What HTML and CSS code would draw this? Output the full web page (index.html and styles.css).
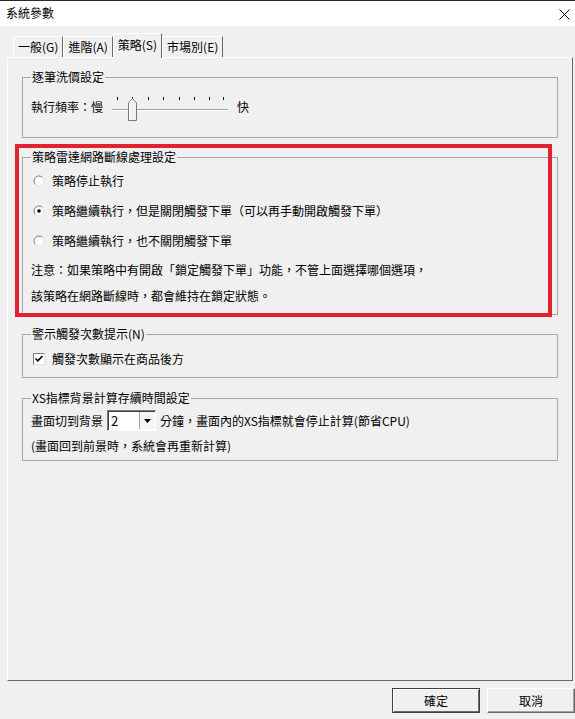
FILE: index.html
```html
<!DOCTYPE html>
<html lang="zh-Hant">
<head>
    <meta charset="UTF-8">
    <title>系統參數</title>
    <link rel="stylesheet" href="styles.css">
</head>
<body>
    <div class="window">
        <div class="titlebar">
            <span>系統參數</span>
            <svg class="close" width="11" height="11" viewBox="0 0 11 11">
                <path d="M0.5 0.5 L10.5 10.5 M10.5 0.5 L0.5 10.5" stroke="#000" stroke-width="1" fill="none"/>
            </svg>
        </div>

        <div class="tabs">
            <div class="tab">一般(G)</div>
            <div class="tab">進階(A)</div>
            <div class="tab active">策略(S)</div>
            <div class="tab">市場別(E)</div>
        </div>

        <div class="panel">
            <fieldset class="group group-price">
                <legend>逐筆洗價設定</legend>
                <div class="row slider-row">
                    <span>執行頻率：慢</span>
                    <svg class="slider" width="124" height="28" viewBox="0 0 124 28">
                        <g stroke="#000" stroke-width="1">
                            <path d="M9.5 4 V7 M24.5 4 V7 M40.5 4 V7 M55.5 4 V7 M71.5 4 V7 M86.5 4 V7 M101.5 4 V7 M115.5 4 V7"/>
                        </g>
                        <path d="M4 16.5 H120" stroke="#a0a0a0"/>
                        <path d="M4 17.5 H120" stroke="#fff"/>
                        <polygon points="20.5,10 24.5,5.5 28.5,10 28.5,27.5 20.5,27.5" fill="#f2f2f2" stroke="#7a7a7a"/>
                        <path d="M21.5 26.5 V10.5 L24.5 7" stroke="#fff" fill="none"/>
                    </svg>
                    <span class="fast">快</span>
                </div>
            </fieldset>

            <fieldset class="group group-radar">
                <legend>策略雷達網路斷線處理設定</legend>
                <label class="row option">
                    <svg class="radio" width="12" height="12" viewBox="0 0 12 12">
                        <circle cx="6" cy="6" r="5" fill="#fff"/>
                        <path d="M2.46 9.54 A5 5 0 0 1 9.54 2.46" stroke="#7a7a7a" fill="none"/>
                        <path d="M9.54 2.46 A5 5 0 0 1 2.46 9.54" stroke="#e3e3e3" fill="none"/>
                    </svg>
                    策略停止執行
                </label>
                <label class="row option">
                    <svg class="radio" width="12" height="12" viewBox="0 0 12 12">
                        <circle cx="6" cy="6" r="5" fill="#fff"/>
                        <path d="M2.46 9.54 A5 5 0 0 1 9.54 2.46" stroke="#7a7a7a" fill="none"/>
                        <path d="M9.54 2.46 A5 5 0 0 1 2.46 9.54" stroke="#e3e3e3" fill="none"/>
                        <circle cx="6" cy="6" r="1.8" fill="#000"/>
                    </svg>
                    策略繼續執行，但是關閉觸發下單（可以再手動開啟觸發下單）
                </label>
                <label class="row option">
                    <svg class="radio" width="12" height="12" viewBox="0 0 12 12">
                        <circle cx="6" cy="6" r="5" fill="#fff"/>
                        <path d="M2.46 9.54 A5 5 0 0 1 9.54 2.46" stroke="#7a7a7a" fill="none"/>
                        <path d="M9.54 2.46 A5 5 0 0 1 2.46 9.54" stroke="#e3e3e3" fill="none"/>
                    </svg>
                    策略繼續執行，也不關閉觸發下單
                </label>
                <div class="row note">注意：如果策略中有開啟「鎖定觸發下單」功能，不管上面選擇哪個選項，</div>
                <div class="row note note-last">該策略在網路斷線時，都會維持在鎖定狀態。</div>
            </fieldset>

            <fieldset class="group group-alert">
                <legend>警示觸發次數提示(N)</legend>
                <label class="row option">
                    <svg class="checkbox" width="12" height="12" viewBox="0 0 12 12">
                        <rect x="0.5" y="0.5" width="11" height="11" fill="#fff" stroke="#e3e3e3"/>
                        <path d="M0.5 11.5 V0.5 H11.5" stroke="#7a7a7a" fill="none"/>
                        <path d="M2.5 5.5 L4.8 7.8 L9.5 3" stroke="#000" stroke-width="1.7" fill="none"/>
                    </svg>
                    觸發次數顯示在商品後方
                </label>
            </fieldset>

            <fieldset class="group group-xs">
                <legend>XS指標背景計算存續時間設定</legend>
                <div class="row combo-row">
                    <span>畫面切到背景</span>
                    <div class="combo">
                        <span class="combo-value">2</span>
                        <span class="combo-btn">
                            <svg width="7" height="4" viewBox="0 0 7 4"><polygon points="0,0 7,0 3.5,4" fill="#000"/></svg>
                        </span>
                    </div>
                    <span>分鐘，畫面內的XS指標就會停止計算(節省CPU)</span>
                </div>
                <div class="row xs-second">(畫面回到前景時，系統會再重新計算)</div>
            </fieldset>

            <div class="highlight"></div>
        </div>

        <div class="footer">
            <button class="btn btn-default">確定</button>
            <button class="btn">取消</button>
        </div>
    </div>
</body>
</html>
```

FILE: styles.css
```css
body {
    margin: 0;
    background: #f0f0f0;
    font-family: "Noto Sans CJK TC", "Noto Sans", sans-serif;
    font-size: 12px;
    color: #000;
}

.window {
    width: 575px;
    height: 719px;
    display: flex;
    flex-direction: column;
    overflow: hidden;
}

.titlebar {
    height: 25px;
    border-top: 1px solid #2b2b2b;
    background: #fff;
    display: flex;
    align-items: center;
    justify-content: space-between;
    padding: 0 5px 0 6px;
    line-height: 16px;
}

.titlebar span {
    margin-top: -1px;
}

.close {
    margin-top: 1px;
}

.tabs {
    height: 31px;
    display: flex;
    align-items: flex-end;
    padding-left: 13px;
}

.tab {
    height: 20px;
    line-height: 19px;
    padding: 0 4px;
    border-top: 1px solid #fff;
    border-left: 1px solid #fff;
    border-right: 1px solid #696969;
}

.tab.active {
    position: relative;
    z-index: 1;
    height: 24px;
    line-height: 21px;
    margin-bottom: -1px;
    background: #f0f0f0;
}

.panel {
    position: relative;
    margin-left: 7px;
    width: 566px;
    height: 624px;
    box-sizing: border-box;
    border: 1px solid;
    border-color: #fff #696969 #696969 #fff;
    padding: 11px 14px 0;
}

.group {
    margin: 0;
    padding: 0 8px;
    border: 1px solid #a6a6a6;
    min-width: 0;
}

.group legend {
    padding: 0 1px;
    line-height: 16px;
}

.row {
    display: flex;
    align-items: center;
    height: 20px;
    line-height: 20px;
    white-space: nowrap;
}

.group-price {
    padding-top: 8px;
    padding-bottom: 16px;
}

.slider-row {
    height: 28px;
}

.slider {
    margin-left: 5px;
}

.fast {
    margin-left: 5px;
}

.group-radar {
    margin-top: 11px;
    padding-top: 6px;
    padding-bottom: 8px;
}

.option {
    padding-left: 2px;
}

.option + .option {
    margin-top: 10px;
}

.radio,
.checkbox {
    margin-right: 7px;
}

.note {
    margin-top: 9px;
}

.note-last {
    margin-top: 6px;
}

.group-alert {
    margin-top: 11px;
    padding-top: 7px;
    padding-bottom: 8px;
}

.group-xs {
    margin-top: 12px;
    padding-top: 4px;
    padding-bottom: 4px;
}

.combo-row {
    height: 21px;
}

.combo {
    display: flex;
    width: 49px;
    height: 21px;
    box-sizing: border-box;
    margin: 0 4px;
    border: 1px solid;
    border-color: #7a7a7a #fff #fff #7a7a7a;
    box-shadow: inset 1px 1px 0 #404040;
    background: #fff;
}

.combo-value {
    flex: 1;
    padding-left: 3px;
    line-height: 19px;
    font-size: 13px;
}

.combo-btn {
    width: 15px;
    margin: 1px 0 1px 0;
    border-left: 1px solid #a0a0a0;
    background: #f4f4f4;
    display: flex;
    align-items: center;
    justify-content: center;
}

.xs-second {
    margin-top: 5px;
}

.highlight {
    position: absolute;
    left: 7px;
    top: 86px;
    width: 537px;
    height: 173px;
    box-sizing: border-box;
    border: 4px solid #e02231;
    pointer-events: none;
}

.footer {
    display: flex;
    justify-content: flex-end;
    gap: 7px;
    padding-top: 7px;
}

.btn {
    width: 88px;
    height: 25px;
    padding: 0;
    font-family: inherit;
    font-size: 12px;
    color: #000;
    background: #f0f0f0;
    border: 1px solid;
    border-color: #fff #696969 #696969 #fff;
    box-shadow: inset -1px -1px 0 #a0a0a0;
}

.btn-default {
    border-color: #404040;
    box-shadow: inset 1px 1px 0 #fff, inset -1px -1px 0 #696969;
}
```
